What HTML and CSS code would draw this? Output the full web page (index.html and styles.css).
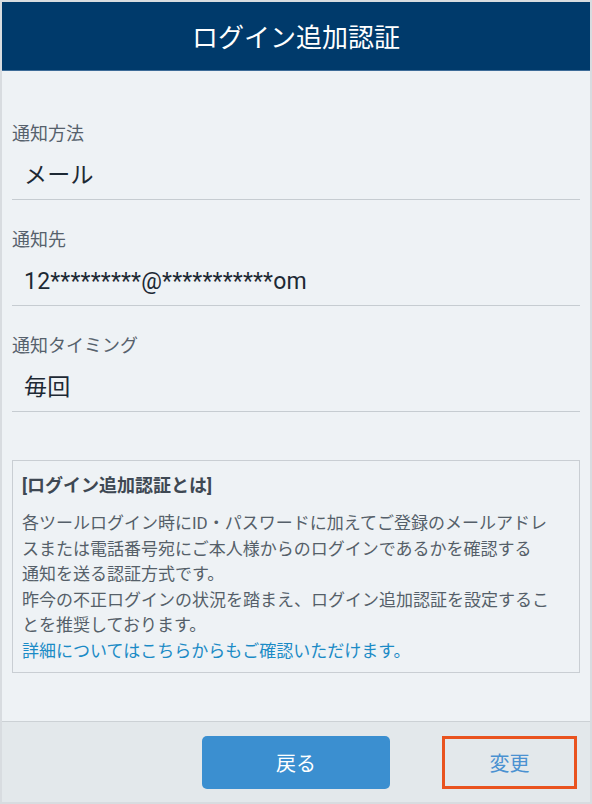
FILE: index.html
```html
<!DOCTYPE html>
<html lang="ja">
<head>
    <meta charset="UTF-8">
    <meta name="viewport" content="width=device-width, initial-scale=1.0">
    <title>ログイン追加認証</title>
    <link rel="stylesheet" href="styles.css">
</head>
<body>

<div class="page">
    <header class="title-bar">
        <h1>ログイン追加認証</h1>
    </header>

    <div class="content">
        <div class="field">
            <div class="field-label">通知方法</div>
            <div class="field-value">メール</div>
        </div>

        <div class="field">
            <div class="field-label">通知先</div>
            <div class="field-value">12*********@***********om</div>
        </div>

        <div class="field">
            <div class="field-label">通知タイミング</div>
            <div class="field-value">毎回</div>
        </div>

        <!-- 説明 -->
        <div class="info-box">
            <h3>[ログイン追加認証とは]</h3>
            <p>
                各ツールログイン時にID・パスワードに加えてご登録のメールアドレ<br>スまたは電話番号宛にご本人様からのログインであるかを確認する<br>通知を送る認証方式です。<br>
                昨今の不正ログインの状況を踏まえ、ログイン追加認証を設定するこ<br>とを推奨しております。<br>
                <a href="#">詳細についてはこちらからもご確認いただけます。</a>
            </p>
        </div>
    </div>

    <footer class="actions">
        <button class="btn-back" type="button">戻る</button>
        <button class="btn-change" type="button">変更</button>
    </footer>
</div>

</body>
</html>
```

FILE: styles.css
```css
* {
    box-sizing: border-box;
}

body {
    margin: 0;
    font-family: Roboto, "Noto Sans CJK JP", sans-serif;
    background-color: #d8dce0;
}

.page {
    width: 592px;
    height: 804px;
    border: 2px solid #d8dce0;
    display: flex;
    flex-direction: column;
    background-color: #eef2f5;
}

.title-bar {
    height: 69px;
    flex-shrink: 0;
    background-color: #003a6b;
    border-bottom: 1px solid #3d6c98;
    display: flex;
    align-items: center;
    justify-content: center;
}

.title-bar h1 {
    margin: 0;
    color: #fff;
    font-size: 26px;
    font-weight: normal;
    padding-bottom: 1px;
}

.content {
    flex: 1;
    padding: 50px 10px 0 10px;
}

.field {
    margin-bottom: 27px;
    border-bottom: 1px solid #c6ccd1;
    padding-bottom: 6px;
}

.field-label {
    font-size: 18px;
    line-height: 26px;
    color: #56616c;
}

.field-value {
    margin-top: 12px;
    padding-left: 12px;
    font-size: 23px;
    line-height: 34px;
    color: #1d2934;
    letter-spacing: 0.2px;
}

.info-box {
    margin-top: 48px;
    border: 1px solid #c9ced3;
    padding: 12px 20px 8px 9px;
}

.info-box h3 {
    margin: 0 0 12px 0;
    font-size: 18px;
    line-height: 26px;
    font-weight: bold;
    color: #3e4853;
}

.info-box p {
    margin: 0;
    font-size: 17px;
    line-height: 25.5px;
    color: #555f69;
    white-space: nowrap;
}

.info-box a {
    color: #1b8bc6;
    text-decoration: none;
}

.actions {
    height: 81px;
    flex-shrink: 0;
    border-top: 1px solid #ccd1d5;
    background-color: #e3e8eb;
    display: flex;
    justify-content: flex-end;
    align-items: center;
    gap: 52px;
    padding-right: 13px;
}

.actions button {
    font-family: Roboto, "Noto Sans CJK JP", sans-serif;
    font-size: 20px;
    height: 53px;
    cursor: pointer;
}

.btn-back {
    width: 188px;
    background-color: #3b8fd0;
    color: #fff;
    border: none;
    border-radius: 5px;
}

.btn-change {
    width: 135px;
    background-color: transparent;
    color: #4a91d1;
    border: 3px solid #e9531f;
}
```
